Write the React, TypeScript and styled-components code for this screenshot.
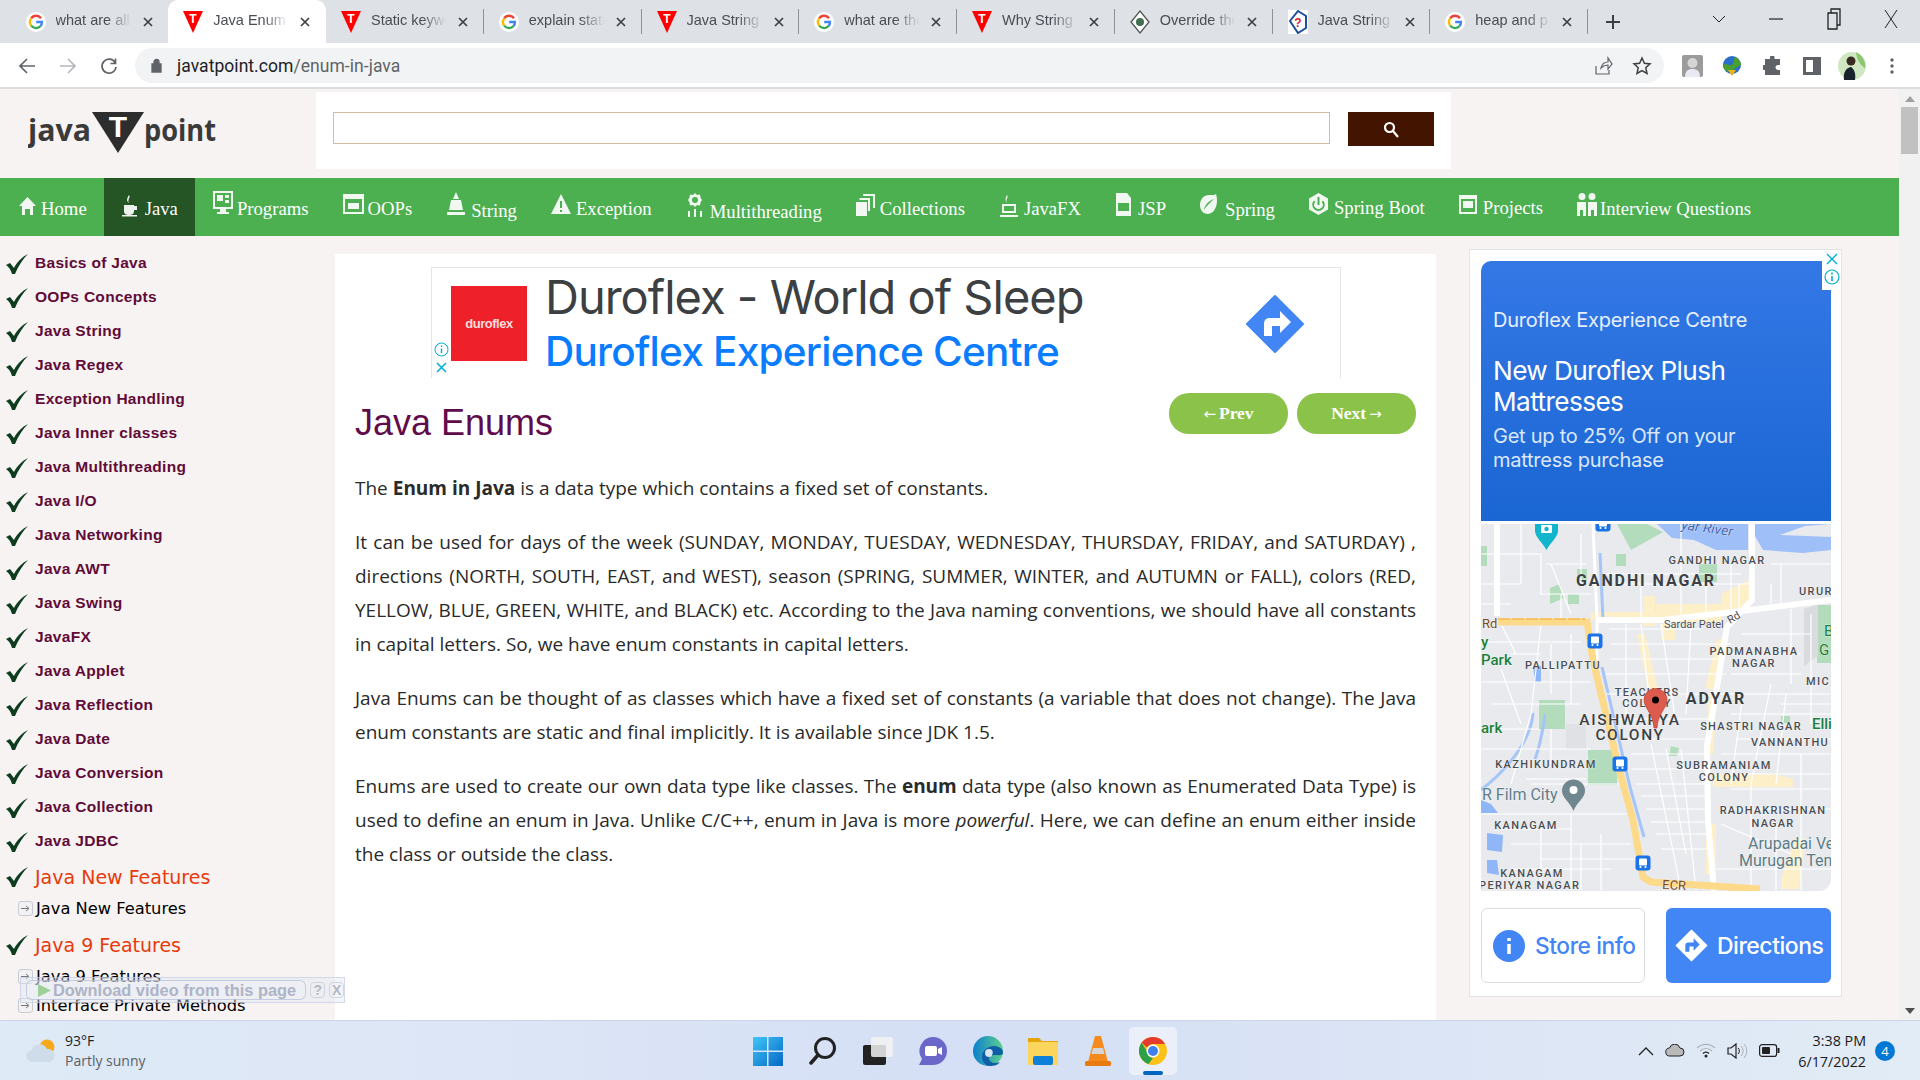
import React from "react";
import styled, { createGlobalStyle } from "styled-components";

const Global = createGlobalStyle`
  html, body { margin: 0; padding: 0; width: 1920px; height: 1080px; overflow: hidden; background: #f6f3f2; }
  #root { width: 1920px; height: 1080px; }
  * { box-sizing: border-box; }
`;

const Screen = styled.div`
  width: 1920px; height: 1080px; display: flex; flex-direction: column; overflow: hidden;
  font-family: "Open Sans", "Liberation Sans", sans-serif; position: relative;
`;

/* ---------- browser chrome ---------- */
const TabStrip = styled.div`
  height: 43px; flex: none; background: #dee1e6; display: flex; align-items: stretch; padding-left: 10.5px;
`;
const TabBox = styled.div<{ $active?: boolean; $sep?: boolean }>`
  flex: 0 0 157.75px; display: flex; align-items: center; padding-left: 15px; position: relative;
  background: ${(p) => (p.$active ? "#fff" : "transparent")};
  border-radius: ${(p) => (p.$active ? "10px 10px 0 0" : "0")};
  &::after {
    content: ""; display: ${(p) => (p.$sep ? "block" : "none")}; position: absolute; right: 0; top: 9px; width: 1px; height: 25px; background: #8e9196;
  }
`;
const TabIcon = styled.span`
  flex: 0 0 20px; width: 20px; height: 24px; display: flex; align-items: center; justify-content: center; margin-right: 10px;
`;
const TabTitle = styled.span`
  width: 82px; height: 18px; line-height: 15px; overflow: hidden; white-space: nowrap; font-family: "Liberation Sans", sans-serif; font-size: 14.5px; color: #4a4e54;
  -webkit-mask-image: linear-gradient(90deg, #000 62%, transparent 92%);
  mask-image: linear-gradient(90deg, #000 62%, transparent 92%);
`;
const TabClose = styled.span`
  margin-left: 3px; display: flex; width: 14px; height: 14px; align-items: center; justify-content: center; color: #3c4043;
`;
const NewTab = styled.span`
  margin-left: 17px; width: 20px; display: flex; align-items: center; color: #3c4043;
`;
const WindowControls = styled.div`
  margin-left: auto; display: flex; align-items: flex-start; color: #222;
`;
const WinBtn = styled.span`
  width: 57.5px; height: 38px; display: flex; align-items: center; justify-content: center;
`;
const Toolbar = styled.div`
  height: 46px; flex: none; background: #fff; border-bottom: 2px solid #dcdde0; display: flex; align-items: flex-start; padding-top: 5px;
`;
const NavBtn = styled.span`
  width: 41px; height: 35px; display: flex; align-items: center; justify-content: center; color: ${(p: { $muted?: boolean }) => (p.$muted ? "#b5b7ba" : "#5f6368")};
`;
const NavBtnGroup = styled.div`
  display: flex; padding-left: 6px; width: 135px;
`;
const Omnibox = styled.div`
  width: 1529px; height: 35px; background: #f1f3f4; border-radius: 18px; display: flex; align-items: center; padding-left: 16px; padding-right: 12px;
`;
const UrlText = styled.span`
  margin-left: 15px; font: 17.5px "Roboto", "Liberation Sans", sans-serif; color: #202124; letter-spacing: .05px;
`;
const UrlRest = styled.span`
  color: #5f6368;
`;
const OmniRight = styled.div`
  margin-left: auto; display: flex; gap: 19px; align-items: center; color: #5f6368;
`;
const Extensions = styled.div`
  flex: 1; display: flex; align-items: center; height: 35px; padding-left: 8px;
`;
const ExtCell = styled.span`
  width: 40px; display: flex; justify-content: center; align-items: center;
`;

/* ---------- page ---------- */
const Viewport = styled.div`
  height: 931px; flex: none; display: flex; overflow: hidden; background: #f6f3f2;
`;
const Page = styled.div`
  width: 1899px; flex: none; display: flex; flex-direction: column;
`;
const Header = styled.div`
  height: 89px; flex: none; display: flex; align-items: flex-start; padding-top: 3px;
`;
const LogoBox = styled.div`
  width: 316px; height: 77px; flex: none; padding: 14px 0 0 28px;
`;
const SearchBox = styled.div`
  width: 1135px; height: 77px; background: #fff; display: flex; align-items: flex-start; padding: 20px 0 0 17px;
`;
const SearchInput = styled.div`
  width: 997px; height: 32px; border: 1px solid #d2bd9f; background: #fff;
`;
const SearchBtn = styled.div`
  margin-left: 18px; width: 86px; height: 34px; background: #431400; display: flex; align-items: center; justify-content: center; color: #fff;
`;
const NavBar = styled.div`
  height: 58px; flex: none; background: #4caf50; display: flex; align-items: stretch; padding-left: 2px;
`;
const NavItem = styled.div<{ $active?: boolean; $gap?: number }>`
  display: flex; align-items: center; padding: 3px 17px 0; gap: ${(p) => p.$gap ?? 5}px; color: #fff; background: ${(p) => (p.$active ? "#255425" : "transparent")};
  font: 18.7px "Liberation Serif", serif; white-space: nowrap;
`;
const NavLabel = styled.span<{ $dy: number }>`
  transform: translateY(${(p) => p.$dy}px);
`;
const NavGlyph = styled.svg<{ $dy: number }>`
  transform: translateY(${(p) => p.$dy}px); flex: none; opacity: .92;
`;
const Columns = styled.div`
  flex: 1; display: flex; align-items: flex-start; min-height: 0;
`;
const Sidebar = styled.div`
  width: 335px; flex: none; padding-top: 10px; height: 100%; overflow: hidden;
`;
const SideRow = styled.div`
  height: 34px; display: flex; align-items: center; padding-left: 6px; font: bold 15.5px "Liberation Sans", sans-serif; color: #610b38; letter-spacing: .3px;
`;
const SideCheck = styled.span`
  width: 29px; flex: none; display: flex; transform: translateY(1px);
`;
const SideHeading = styled.div<{ $gap: number }>`
  height: 37px; display: flex; align-items: center; padding-left: 6px; font: 19px "DejaVu Sans", sans-serif; color: #e8390b; margin-top: ${(p) => p.$gap}px;
`;
const SubRow = styled.div<{ $h: number }>`
  height: ${(p) => p.$h}px; display: flex; align-items: center; padding-left: 18px; font: 16.3px "DejaVu Sans", sans-serif; color: #000; gap: 3px;
`;
const SubIcon = styled.span`
  width: 15px; height: 15px; flex: none; border: 1px solid #c9cdd3; border-radius: 3px; background: #f2f2f4; display: flex; align-items: center; justify-content: center; color: #777;
`;
const DownloadBar = styled.div`
  position: absolute; left: 20px; top: 977px; width: 325px; height: 26px; background: rgba(225, 230, 242, .4); border: 1px solid rgba(190, 200, 225, .6); display: flex; align-items: center; padding-left: 5px; gap: 3px;
`;
const DownloadPill = styled.div`
  width: 284px; height: 20px; border: 1px solid rgba(170, 180, 210, .6); border-radius: 6px; display: flex; align-items: center; padding-left: 10px; gap: 1px; font: bold 16.4px "Liberation Sans", sans-serif; color: #aeb4c6; background: rgba(240, 242, 250, .3); white-space: nowrap;
`;
const DownloadMini = styled.span`
  width: 15px; height: 16px; margin-left: 1px; border-radius: 4px; border: 1px solid #cfd4e2; font: bold 14px "Liberation Sans", sans-serif; color: #b3b8c8; display: flex; align-items: center; justify-content: center;
`;

const Main = styled.div`
  width: 1101px; flex: none; height: 766px; margin-top: 18px; background: #fff; padding: 13px 20px 0;
`;
const TopAd = styled.div`
  width: 910px; height: 111px; margin-left: 76px; border: 1px solid #e5e5e5; border-bottom: none; display: flex; position: relative; padding: 18px 0 0 19px;
`;
const AdLogo = styled.div`
  width: 76px; height: 75px; flex: none; background: #ee2029; display: flex; align-items: center; justify-content: center; color: #fbdcdc; font: bold 13px "Liberation Sans", sans-serif; letter-spacing: -.5px;
`;
const AdText = styled.div`
  margin: -17px 0 0 18px; display: flex; flex-direction: column;
`;
const AdTitle = styled.div`
  font: 47px/56px "Inter", "Liberation Sans", sans-serif; color: #3c4043; letter-spacing: -1px; white-space: nowrap;
`;
const AdSub = styled.div`
  font: 500 40.5px/54px "Inter", "Liberation Sans", sans-serif; color: #0a7cff; letter-spacing: -.75px; white-space: nowrap;
`;
const AdDiamond = styled.span`
  position: absolute; left: 814px; top: 27px; display: flex;
`;
const AdMarks = styled.span`
  position: absolute; left: 2px; top: 74px; display: flex; flex-direction: column; gap: 5px; align-items: center;
`;
const TitleRow = styled.div`
  display: flex; align-items: flex-start; margin-top: 15px; height: 78px;
`;
const PageTitle = styled.h1`
  margin: 8px 0 0; font: 400 36px/44px "Liberation Sans", sans-serif; color: #610b4b;
`;
const Pager = styled.div`
  margin-left: auto; display: flex; gap: 9px;
`;
const PagerBtn = styled.div`
  width: 119px; height: 41px; background: #8bc34a; border-radius: 20px; display: flex; align-items: center; justify-content: center; gap: 3px; color: #fff; font: bold 17.5px "Liberation Serif", serif;
`;
const PagerArrow = styled.span`
  font: 400 15px "DejaVu Sans", sans-serif;
`;
const Para = styled.p`
  margin: 0 0 20px; font: 19px/34px "Open Sans", "Noto Sans", sans-serif; color: #2a2a2a; text-align: justify;
`;

const RightAd = styled.div`
  width: 373px; flex: none; margin: 13px 0 0 33px; height: 748px; background: #fff; border: 1px solid #e2e2e2; padding: 11px 0 0 11px; position: relative;
`;
const AdHero = styled.div`
  width: 350px; height: 260px; border-radius: 10px 0 0 0; background: linear-gradient(180deg, #3478e6, #1a66d2); color: #fff; padding: 46px 0 0 12px;
`;
const HeroEyebrow = styled.div`
  font: 20px/26px "Inter", "Liberation Sans", sans-serif; color: #e6efff; letter-spacing: -.25px;
`;
const HeroTitle = styled.div`
  margin-top: 22px; font: 26.2px/31px "Inter", "Liberation Sans", sans-serif; letter-spacing: -.6px;
`;
const HeroText = styled.div`
  margin-top: 7px; font: 20px/24px "Inter", "Liberation Sans", sans-serif; color: #dbe7fb; letter-spacing: -.25px;
`;
const AdCorner = styled.span`
  position: absolute; right: 0; top: 0; width: 19px; height: 40px; background: #fff; display: flex; flex-direction: column; align-items: center; padding-top: 3px; gap: 4px;
`;
const MapFrame = styled.div`
  width: 350px; height: 367px; margin-top: 3px; border-radius: 0 0 12px 0; overflow: hidden; display: flex;
`;
const AdButtons = styled.div`
  margin-top: 17px; width: 350px; display: flex; justify-content: space-between;
`;
const StoreBtn = styled.div`
  width: 164px; height: 75px; border: 1px solid #dadce0; border-radius: 6px; display: flex; align-items: center; padding-left: 11px; gap: 10px; color: #4285f4; font: 500 22.7px "Inter", "Liberation Sans", sans-serif; letter-spacing: -.4px; white-space: nowrap;
`;
const DirBtn = styled.div`
  width: 165px; height: 75px; border-radius: 6px; background: #4285f4; display: flex; align-items: center; padding-left: 9px; gap: 9px; color: #fff; font: 500 23px "Inter", "Liberation Sans", sans-serif; letter-spacing: -.5px; white-space: nowrap;
`;

const Scrollbar = styled.div`
  width: 21px; flex: none; background: #f1f1f1; display: flex; flex-direction: column; align-items: center; padding-top: 7px; color: #a0a0a0;
`;
const ScrollThumb = styled.div`
  width: 17px; height: 47px; margin-top: 5px; background: #c1c1c1;
`;
const ScrollDown = styled.span`
  margin-top: auto; margin-bottom: 6px; display: flex; color: #505050;
`;

/* ---------- taskbar ---------- */
const Taskbar = styled.div`
  height: 60px; flex: none; display: flex; align-items: stretch; border-top: 1px solid #cbd5e6;
  background: linear-gradient(90deg, #deeaf6 0%, #dde6f6 25%, #d5dff5 50%, #dbe5f5 75%, #e2ecf6 100%);
`;
const Weather = styled.div`
  width: 740px; flex: none; display: flex; align-items: center; padding-left: 26px; gap: 9px;
`;
const WeatherText = styled.div`
  display: flex; flex-direction: column; font: 14px/20px "Open Sans", sans-serif; color: #1f1f1f;
`;
const WeatherSub = styled.span`
  color: #5a5f66;
`;
const TaskIcons = styled.div`
  display: flex; align-items: center;
`;
const TaskCell = styled.span<{ $on?: boolean }>`
  width: 48px; height: 48px; margin: 0 3.5px; display: flex; align-items: center; justify-content: center; position: relative; border-radius: 5px;
  background: ${(p) => (p.$on ? "#ebeffa" : "transparent")};
  &::after {
    content: ""; display: ${(p) => (p.$on ? "block" : "none")}; position: absolute; bottom: 0; left: 14px; width: 20px; height: 4px; border-radius: 2px; background: #0067c0;
  }
`;
const Tray = styled.div`
  margin-left: auto; display: flex; align-items: center; padding-right: 25px; color: #222;
`;
const TrayIcons = styled.div`
  display: flex; align-items: center; gap: 11px; margin-right: 18px;
`;
const Clock = styled.div`
  display: flex; flex-direction: column; align-items: flex-end; font: 14.3px/21px "Open Sans", sans-serif; color: #1a1a1a; margin-right: 9px;
`;
const Badge = styled.span`
  width: 20px; height: 20px; border-radius: 50%; background: #0078d4; color: #fff; font: 13px "Open Sans", sans-serif; display: flex; align-items: center; justify-content: center;
`;

/* ---------- drawings ---------- */
const GFav = () => (
  <svg width="20" height="20" viewBox="0 0 20 20">
    <circle cx="10" cy="10" r="10" fill="#fff" />
    <path d="M15 6.2A6 6 0 0 0 5.2 6.4" fill="none" stroke="#ea4335" strokeWidth="2.4" />
    <path d="M5.2 6.4a6 6 0 0 0 0 7.2" fill="none" stroke="#fbbc05" strokeWidth="2.4" />
    <path d="M5.2 13.6A6 6 0 0 0 14.6 14" fill="none" stroke="#34a853" strokeWidth="2.4" />
    <path d="M14.6 14a6 6 0 0 0 1.3-4H10.2" fill="none" stroke="#4285f4" strokeWidth="2.4" />
  </svg>
);
const TFav = () => (
  <svg width="20" height="24" viewBox="0 0 20 24">
    <path d="M0 1h20L10 23z" fill="#f00" />
    <text x="10" y="13" textAnchor="middle" fontFamily="Liberation Sans" fontWeight="700" fontSize="12" fill="#fff">T</text>
  </svg>
);
const DiamondFav = () => (
  <svg width="20" height="24" viewBox="0 0 20 24">
    <path d="M10 1l9 11-9 11-9-11z" fill="#fff" stroke="#555" strokeWidth="1.3" />
    <circle cx="10" cy="12" r="4" fill="#3f6f4f" />
  </svg>
);
const QFav = () => (
  <svg width="20" height="24" viewBox="0 0 20 24">
    <rect width="20" height="24" fill="#fff" />
    <path d="M10 1l8 5v12l-8 5-8-12z" fill="#fff" stroke="#1c4f9c" strokeWidth="2" />
    <text x="10" y="17" textAnchor="middle" fontFamily="Liberation Sans" fontWeight="700" fontSize="12" fill="#d2232a">?</text>
  </svg>
);
const CloseX = () => (
  <svg width="10" height="10" viewBox="0 0 10 10"><path d="M1 1l8 8M9 1L1 9" stroke="currentColor" strokeWidth="1.7" /></svg>
);
const Check = () => (
  <svg width="23" height="21" viewBox="0 0 23 21">
    <path d="M0 11l4-2 4 5C11 8 16 3 22 0c-5 5-10 12-13 20H6C5 16 3 13 0 11z" fill="#0e3c1f" />
  </svg>
);
const Glyph = ({ w, h, dy, children }: { w: number; h: number; dy: number; children: React.ReactNode }) => (
  <NavGlyph width={w} height={h} viewBox={`0 0 ${w} ${h}`} $dy={dy} fill="#fff">{children}</NavGlyph>
);

const tabs: { t: string; i: React.ReactNode }[] = [
  { t: "what are all", i: <GFav /> },
  { t: "Java Enum - ", i: <TFav /> },
  { t: "Static keyword", i: <TFav /> },
  { t: "explain static", i: <GFav /> },
  { t: "Java String - ", i: <TFav /> },
  { t: "what are the", i: <GFav /> },
  { t: "Why String", i: <TFav /> },
  { t: "Override the", i: <DiamondFav /> },
  { t: "Java String s", i: <QFav /> },
  { t: "heap and p", i: <GFav /> },
];

const navItems: { l: string; dy: number; g: number; icon: React.ReactNode; active?: boolean }[] = [
  { l: "Home", dy: 0, g: 5, icon: <Glyph w={17} h={20} dy={-3}><path d="M8.5 1L17 10h-3v9h-3v-6H6v6H3v-9H0z" /></Glyph> },
  { l: "Java", dy: 0, g: 7, active: true, icon: <Glyph w={17} h={24} dy={-3}><path d="M3 11h10v6c0 3-2 4-5 4s-5-1-5-4zM13 12h3v4h-3zM1 21h15v1.5H1zM8 1c2 3-2 4 0 8-3-2-2-5 0-8z" /></Glyph> },
  { l: "Programs", dy: 0, g: 3, icon: <Glyph w={22} h={26} dy={-5}><path fillRule="evenodd" d="M1 0h20v18h-7v3h3v2H5v-2h3v-3H1zM3 2v14h16V2zM5 4h6v6H5zM13 4h4v3h-4zM13 9h4v3h-4z" /></Glyph> },
  { l: "OOPs", dy: 0, g: 4, icon: <Glyph w={21} h={22} dy={-4}><path fillRule="evenodd" d="M0 0h21v20H0zM2 5v13h17V5zM5 9h11v6H5z" /></Glyph> },
  { l: "String", dy: 2, g: 5, icon: <Glyph w={20} h={26} dy={-4}><path d="M10 0l3 7H7zM5 8h10l2 10H3zM1 20h18v3H1z" /></Glyph> },
  { l: "Exception", dy: 0, g: 5, icon: <Glyph w={20} h={22} dy={-4}><path fillRule="evenodd" d="M10 0l10 20H0zM9 7v7h2V7zM9 16v2h2v-2z" /></Glyph> },
  { l: "Multithreading", dy: 3, g: 6, icon: <Glyph w={18} h={26} dy={-3}><path fillRule="evenodd" d="M9 0l2 2 3-.5.5 3L16 7l-1.500 2.500-.5 3-3-.5-2 2-2-2-3 .5-.5-3L2 7l1.500-2.500.5-3 3 .5zM9 4a3 3 0 100 6 3 3 0 000-6zM2 18h2v6H2zM8 16h2v8H8zM14 18h2v6h-2z" /></Glyph> },
  { l: "Collections", dy: 0, g: 5, icon: <Glyph w={19} h={24} dy={-4}><path d="M0 9h11v14H0zM3.500 5H14v13h-2V7H3.500zM7 1h12v14h-2V3H7z" /></Glyph> },
  { l: "JavaFX", dy: 0, g: 5, icon: <Glyph w={20} h={24} dy={-2}><path fillRule="evenodd" d="M3 9h14v9H3zM5 11v5h10v-5zM8 0c2 3-2 4 0 8-2-2-2-5 0-8zM1 20h18v2H1z" /></Glyph> },
  { l: "JSP", dy: 0, g: 6, icon: <Glyph w={17} h={24} dy={-4}><path fillRule="evenodd" d="M1 0h11l4 5v18H1zM3 10v8h11v-8z" /></Glyph> },
  { l: "Spring", dy: 1, g: 7, icon: <Glyph w={18} h={22} dy={-4}><path fillRule="evenodd" d="M9 1c2 0 5 .5 7-1 3 9-1 20-8 20C3 20 0 16 0 11 0 5 4 1 9 1zM14 5C9 7 5 10 4 16c2-4 6-7 10-11z" /></Glyph> },
  { l: "Spring Boot", dy: -1, g: 6, icon: <Glyph w={19} h={22} dy={-5}><path fillRule="evenodd" d="M9.500 0L19 5.500v11L9.500 22 0 16.500v-11zM8.500 4v8h2V4zM5 7.500a6.200 6.200 0 109 0l-1.300 1.400a4.300 4.300 0 11-6.400 0z" /></Glyph> },
  { l: "Projects", dy: -1, g: 6, icon: <Glyph w={18} h={20} dy={-4}><path fillRule="evenodd" d="M0 0h18v19H0zM2 4v13h14V4zM4 6h10v7H4z" /></Glyph> },
  { l: "Interview Questions", dy: 0, g: 3, icon: <Glyph w={20} h={23} dy={-4}><path fillRule="evenodd" d="M5 0a3.500 3.500 0 110 7 3.500 3.500 0 010-7zM15 0a3.500 3.500 0 110 7 3.500 3.500 0 010-7zM0 9h9v14H6v-6H3v6H0zM11 9h9v14h-3v-6h-3v6h-3z" /></Glyph> },
];

const sideItems = [
  "Basics of Java", "OOPs Concepts", "Java String", "Java Regex", "Exception Handling", "Java Inner classes",
  "Java Multithreading", "Java I/O", "Java Networking", "Java AWT", "Java Swing", "JavaFX", "Java Applet",
  "Java Reflection", "Java Date", "Java Conversion", "Java Collection", "Java JDBC",
];

type L = { t: string; x: number; y: number; s?: number; c?: string; a?: "middle" | "start"; w?: number; ls?: number; r?: number; it?: boolean };
const dk = "#4a4d52";
const labels: L[] = [
  { t: "yar River", x: 200, y: 5, s: 14, c: "#3f66b0", r: 8, it: true },
  { t: "GANDHI NAGAR", x: 236, y: 40, s: 11, c: dk, a: "middle", ls: 1.4, w: 500 },
  { t: "GANDHI NAGAR", x: 165, y: 62, s: 16, c: "#3c4043", a: "middle", ls: 1.9, w: 700 },
  { t: "URUR", x: 318, y: 71, s: 11, c: dk, ls: 1.4, w: 500 },
  { t: "Rd", x: 1, y: 104, s: 13, c: "#7a4a1a" },
  { t: "Sardar Patel", x: 183, y: 104, s: 11, c: dk },
  { t: "Rd", x: 249, y: 100, s: 11, c: dk, r: -30 },
  { t: "y", x: 0, y: 123, s: 15, c: "#1a7f3c", w: 500 },
  { t: "Park", x: 0, y: 141, s: 15, c: "#1a7f3c", w: 500 },
  { t: "PALLIPATTU", x: 44, y: 145, s: 11, c: dk, ls: 1.4, w: 500 },
  { t: "PADMANABHA", x: 273, y: 131, s: 11, c: dk, a: "middle", ls: 1.4, w: 500 },
  { t: "NAGAR", x: 273, y: 143, s: 11, c: dk, a: "middle", ls: 1.4, w: 500 },
  { t: "B", x: 343, y: 112, s: 15, c: "#1a7f3c" },
  { t: "G", x: 338, y: 131, s: 15, c: "#1a7f3c" },
  { t: "MIC", x: 325, y: 161, s: 11, c: dk, ls: 1.4, w: 500 },
  { t: "TEACHERS", x: 166, y: 172, s: 11, c: dk, a: "middle", ls: 1.2, w: 500 },
  { t: "COLONY", x: 166, y: 183, s: 11, c: dk, a: "middle", ls: 1.2, w: 500 },
  { t: "ADYAR", x: 235, y: 180, s: 16, c: "#3c4043", a: "middle", ls: 2, w: 700 },
  { t: "AISHWARYA", x: 149, y: 201, s: 15.5, c: "#3c4043", a: "middle", ls: 1.6, w: 500 },
  { t: "COLONY", x: 149, y: 216, s: 15.5, c: "#3c4043", a: "middle", ls: 1.6, w: 500 },
  { t: "SHASTRI NAGAR", x: 270, y: 206, s: 11, c: dk, a: "middle", ls: 1.3, w: 500 },
  { t: "VANNANTHU", x: 270, y: 222, s: 11, c: dk, ls: 1.3, w: 500 },
  { t: "Elli", x: 331, y: 205, s: 15, c: "#1a7f3c", w: 500 },
  { t: "ark", x: 0, y: 209, s: 15, c: "#1a7f3c", w: 500 },
  { t: "KAZHIKUNDRAM", x: 65, y: 244, s: 11, c: dk, a: "middle", ls: 1.4, w: 500 },
  { t: "SUBRAMANIAM", x: 243, y: 245, s: 11, c: dk, a: "middle", ls: 1.4, w: 500 },
  { t: "COLONY", x: 243, y: 257, s: 11, c: dk, a: "middle", ls: 1.4, w: 500 },
  { t: "R Film City", x: 1, y: 276, s: 16, c: "#5f7d8a" },
  { t: "RADHAKRISHNAN", x: 292, y: 290, s: 11, c: dk, a: "middle", ls: 1.2, w: 500 },
  { t: "NAGAR", x: 292, y: 303, s: 11, c: dk, a: "middle", ls: 1.2, w: 500 },
  { t: "KANAGAM", x: 45, y: 305, s: 11, c: dk, a: "middle", ls: 1.4, w: 500 },
  { t: "Arupadai Ve", x: 267, y: 325, s: 16, c: "#5b7b85" },
  { t: "Murugan Ten", x: 258, y: 342, s: 16, c: "#5b7b85" },
  { t: "KANAGAM", x: 51, y: 353, s: 11, c: dk, a: "middle", ls: 1.4, w: 500 },
  { t: "PERIYAR NAGAR", x: -2, y: 365, s: 11, c: dk, ls: 1.4, w: 500 },
  { t: "ECR", x: 181, y: 365, s: 13, c: "#7a4a1a", r: 3 },
];

const thin = [
  "M0 30H60V70H110", "M40 0V60", "M0 60H40", "M70 40L90 90", "M0 118H100", "M60 100L50 190L30 260", "M0 158H110", "M10 180H100", "M0 225H110",
  "M50 260H140", "M0 290H145", "M90 290V366", "M30 320H150", "M120 310V366", "M60 335H160",
  "M125 50H260", "M135 60H270", "M130 120H250", "M125 150H245", "M125 170H240", "M130 195H230", "M145 100V190", "M180 100L195 200",
  "M200 0V90", "M160 60V96", "M225 60V96", "M250 40V85", "M170 220L200 366", "M150 230H225", "M155 260H230", "M165 285H225", "M175 310H230",
  "M240 170H350", "M290 160L270 260", "M240 230H350", "M250 265H350", "M240 300L310 330", "M330 90V200", "M290 40H350", "M300 40V80", "M320 230V366", "M235 345H350",
  "M260 110H330", "M250 150H320", "M300 180H350", "M0 80H30", "M20 100L35 130",
  "M130 135H240", "M128 105H220", "M140 215H225", "M150 245H228", "M160 272H225", "M170 298H228", "M180 325H230",
  "M210 100L205 190", "M160 100L170 190", "M200 225L215 366", "M185 225L205 330", "M258 60V90", "M290 60V80", "M310 85V160",
  "M240 130H320", "M250 190H350", "M255 215H350", "M245 250H350", "M262 170L250 260", "M305 170L295 260", "M240 285H350", "M270 260V366", "M295 300V366",
  "M30 130H60", "M70 120V170", "M90 110V180", "M20 205H58", "M20 145L40 200", "M45 255H105", "M70 205V240", "M20 305H90", "M60 300V366", "M30 345H130", "M100 320V366", "M80 70V100", "M65 40H105", "M100 10V60",
];
const pale = [
  "M162 72h12v30h-12z", "M110 88h90v8h-90z", "M175 80h65v18h-65z", "M240 70l30-15v30l-30 6z", "M164 110l14 60h-10l-12-60z", "M180 100h14v16h-14z",
  "M236 115l8 0-12 50h-8z", "M228 170h8l-4 60h-8z", "M232 250h60l20 5v8h-80z", "M225 300h10v50h-10z", "M300 355l14-40h10l-6 50h-18z",
];
const green: string[] = [
  "M69 64l10-4 4 14-14 6z", "M87 70h11v10h-11z", "M58 176h26v29H58z", "M107 226h29v35h-29z", "M336 81h14v58h-14z", "M96 45h10v12H96z",
  "M0 22h6v20H0z", "M135 30h10v12h-10z", "M218 40h18v18h-18z", "M300 192h9v7h-9z", "M190 222l8 2-2 8-8 0z", "M136 0h30l16 8-32 18z",
];

const MapDrawing = () => (
  <svg width="350" height="367" viewBox="0 0 350 367">
    <rect width="350" height="367" fill="#e8eaed" />
    {green.map((d) => <path key={d} d={d} fill="#b2dcbc" />)}
    <path d="M176 0h91v26h-32l-22-10-22-2z" fill="#9fbff8" />
    <path d="M274 0h76v26l-28 3-40-3-8-14z" fill="#9fbff8" />
    <path d="M299 11l25-9 26-2v13z" fill="#e8eaed" />
    <path d="M6 309l16 2-1 17-15-2zM6 336l10 0 2 15-12-2zM0 276l10 4 7 9H0zM52 142h8v16h-6z" fill="#8fb6f6" />
    <rect x="85" y="200" width="20" height="25" fill="#dfe1e4" />
    <path d="M323 85l14-5v52l-14 10z" fill="#d9dbdf" />
    {pale.map((d) => <path key={d} d={d} fill="#fdf0c9" />)}
    <path d="M119 29l3 67M121 143l28 120 14 50" fill="none" stroke="#a5c4f7" strokeWidth="3" />
    <path d="M52 189c-2 30-30 60-52 77M64 190c-2 20-8 40-10 45" fill="none" stroke="#a5c4f7" strokeWidth="3" />
    {thin.map((d) => <path key={d} d={d} fill="none" stroke="#fff" strokeWidth="1.2" />)}
    <path d="M16 0V92M116 96H182L269 86L350 76M271 0V76L246 103L226 222L227 296L233 367" fill="none" stroke="#fff" strokeWidth="6" />
    <path d="M112 0L116 96V140" fill="none" stroke="#fff" strokeWidth="3" />
    <path d="M17 98H106L112 136L139 249L152 296L162 353L170 358L279 365" fill="none" stroke="#fdd98a" strokeWidth="7" />
    <path d="M17 95H104" fill="none" stroke="#f5a623" strokeWidth="1.2" strokeDasharray="12 2" />
    {labels.map((l, i) => (
      <text
        key={i}
        x={l.x}
        y={l.y}
        fontFamily="Roboto, Liberation Sans, sans-serif"
        fontSize={l.s}
        fill={l.c}
        fontWeight={l.w ?? 400}
        fontStyle={l.it ? "italic" : "normal"}
        textAnchor={l.a ?? "start"}
        letterSpacing={l.ls ?? 0}
        transform={l.r ? `rotate(${l.r} ${l.x} ${l.y})` : undefined}
        stroke="#fff"
        strokeWidth=".5"
        paintOrder="stroke"
      >
        {l.t}
      </text>
    ))}
    {[[114, 117], [139, 240], [122, 0], [162, 339]].map(([x, y]) => (
      <g key={`${x}-${y}`}>
        <rect x={x - 7.5} y={y - 7.5} width="15" height="15" rx="3" fill="#1a73e8" />
        <rect x={x - 4} y={y - 4.5} width="8" height="7" rx="1" fill="#fff" />
        <circle cx={x - 2.5} cy={y + 4} r="1.1" fill="#fff" />
        <circle cx={x + 2.500} cy={y + 4} r="1.1" fill="#fff" />
      </g>
    ))}
    <path d="M54 -2h23v9c0 6-8 12-11.500 19C62 19 54 13 54 7z" fill="#12b5cb" />
    <rect x="60" y="1" width="11" height="8" rx="1" fill="#fff" />
    <circle cx="65.500" cy="5" r="2.200" fill="#12b5cb" />
    <path d="M81 267a11.500 11.500 0 1123 0c0 7-8 11-11.500 20C89 278 81 274 81 267z" fill="#70878f" />
    <circle cx="92.500" cy="266" r="4" fill="#fff" />
    <path d="M163 176a11.500 11.500 0 1123 0c0 8-9 13-10 28h-3c-1-15-10-20-10-28z" fill="#dd5b4c" stroke="#b8443a" strokeWidth=".7" />
    <circle cx="174.500" cy="176" r="3.500" fill="#000" />
  </svg>
);

const DirDiamond = ({ s, bg, fg }: { s: number; bg: string; fg: string }) => (
  <svg width={s} height={s} viewBox="0 0 32 32">
    <path d="M16 1l15 15-15 15L1 16z" fill={bg} stroke={bg} strokeWidth="1" strokeLinejoin="round" />
    <path d="M10 22v-6c0-2 1-3 3-3h5V9l6 6-6 6v-4h-4v5z" fill={fg} />
  </svg>
);

const ChromeLogo = () => (
  <svg width="28" height="28" viewBox="0 0 28 28">
    <circle cx="14" cy="14" r="14" fill="#fbc116" />
    <path d="M14 0a14 14 0 0112.100 7H14a7 7 0 00-6.100 3.500L2.600 5.500A14 14 0 0114 0z" fill="#e33b2e" />
    <path d="M2.600 5.500L8 14.500a7 7 0 006 6.500L9.500 27A14 14 0 012.600 5.500z" fill="#2d9f46" />
    <circle cx="14" cy="14" r="6.500" fill="#fff" />
    <circle cx="14" cy="14" r="5" fill="#3f80ee" />
  </svg>
);

const SubArrow = () => (
  <SubIcon><svg width="9" height="7" viewBox="0 0 9 7"><path d="M0 3.500h7M5 1l3 2.500L5 6" fill="none" stroke="currentColor" /></svg></SubIcon>
);

export default function App() {
  return (
    <Screen>
      <Global />
      <TabStrip>
        {tabs.map((t, i) => (
          <TabBox key={i} $active={i === 1} $sep={i >= 2}>
            <TabIcon>{t.i}</TabIcon>
            <TabTitle>{t.t}</TabTitle>
            <TabClose><CloseX /></TabClose>
          </TabBox>
        ))}
        <NewTab>
          <svg width="16" height="16" viewBox="0 0 16 16"><path d="M8 1v14M1 8h14" stroke="currentColor" strokeWidth="2" /></svg>
        </NewTab>
        <WindowControls>
          <WinBtn><svg width="14" height="8" viewBox="0 0 14 8"><path d="M1 1l6 6 6-6" fill="none" stroke="currentColor" /></svg></WinBtn>
          <WinBtn><svg width="14" height="2" viewBox="0 0 14 2"><path d="M0 1h14" stroke="currentColor" strokeWidth="1.2" /></svg></WinBtn>
          <WinBtn><svg width="14" height="22" viewBox="0 0 14 22"><path d="M1 5h9v16H1zM4 5V1h9v16h-3" fill="none" stroke="currentColor" strokeWidth="1.3" /></svg></WinBtn>
          <WinBtn><svg width="14" height="20" viewBox="0 0 14 20"><path d="M1 1l12 18M13 1L1 19" stroke="currentColor" strokeWidth="1" /></svg></WinBtn>
        </WindowControls>
      </TabStrip>

      <Toolbar>
        <NavBtnGroup>
          <NavBtn>
            <svg width="18" height="18" viewBox="0 0 18 18"><path d="M17 9H2M9 2L2 9l7 7" fill="none" stroke="currentColor" strokeWidth="1.700" /></svg>
          </NavBtn>
          <NavBtn $muted>
            <svg width="18" height="18" viewBox="0 0 18 18"><path d="M1 9h15M9 2l7 7-7 7" fill="none" stroke="currentColor" strokeWidth="1.700" /></svg>
          </NavBtn>
          <NavBtn>
            <svg width="18" height="18" viewBox="0 0 18 18"><path d="M15 5.500A7 7 0 1016 10M15.500 1.500v5h-5" fill="none" stroke="currentColor" strokeWidth="1.700" /></svg>
          </NavBtn>
        </NavBtnGroup>
        <Omnibox>
          <svg width="11" height="15" viewBox="0 0 11 15"><path d="M1 6h9v8H1zM3 6V4a2.500 2.500 0 015 0v2" fill="#5f6368" stroke="#5f6368" strokeWidth="1.300" /></svg>
          <UrlText>javatpoint.com<UrlRest>/enum-in-java</UrlRest></UrlText>
          <OmniRight>
            <svg width="20" height="20" viewBox="0 0 20 20"><path d="M3 10v8h13v-4M8 12c1-4 4-6 7-6V2l4 6-4 5V9c-3 0-5 1-7 3z" fill="none" stroke="currentColor" strokeWidth="1.200" /></svg>
            <svg width="20" height="20" viewBox="0 0 20 20"><path d="M10 2l2.400 5.300 5.600.600-4.200 3.900 1.200 5.700L10 14.600 5 17.500l1.200-5.700L2 7.900l5.600-.6z" fill="none" stroke="#3c4043" strokeWidth="1.500" /></svg>
          </OmniRight>
        </Omnibox>
        <Extensions>
          <ExtCell><svg width="21" height="22" viewBox="0 0 21 22"><rect width="21" height="22" rx="2" fill="#9b9b9b" /><circle cx="10.500" cy="8" r="5" fill="#d6d6d6" /><path d="M3 22c0-6 3-8 7.500-8S18 16 18 22z" fill="#e8eaf2" /></svg></ExtCell>
          <ExtCell><svg width="20" height="22" viewBox="0 0 20 22"><circle cx="10" cy="10" r="9" fill="#2a6fc9" /><path d="M1 10c3-3 7 2 9 0s1-7 4-8c3 2 5 5 5 8-5 1-9 8-12 7-4-1-6-4-6-7z" fill="#4aa02c" /><path d="M10 21l-4-6h8z" fill="#f2b01e" /></svg></ExtCell>
          <ExtCell><svg width="19" height="19" viewBox="0 0 19 19"><path d="M7 1a2.300 2.300 0 014.500 0V3H17v6h-2a2.500 2.500 0 000 5h2v5H2v-5H1a2.500 2.500 0 010-5h1V3h5z" fill="#5f6368" /></svg></ExtCell>
          <ExtCell><svg width="18" height="18" viewBox="0 0 18 18"><path fillRule="evenodd" d="M0 0h18v18H0zM3 3v12h7V3z" fill="#5f6368" /></svg></ExtCell>
          <ExtCell><svg width="28" height="28" viewBox="0 0 28 28"><circle cx="14" cy="14" r="14" fill="#cfe8c2" /><path d="M6 28c-1-8 2-12 7-13 3 2 5 6 4 13z" fill="#17222c" /><circle cx="13" cy="9" r="4.500" fill="#3b2a22" /><path d="M18 0c6 3 10 9 9 16-3-2-8-6-9-16z" fill="#8ac76d" /></svg></ExtCell>
          <ExtCell><svg width="4" height="16" viewBox="0 0 4 16"><circle cx="2" cy="2" r="1.700" fill="#5f6368" /><circle cx="2" cy="8" r="1.700" fill="#5f6368" /><circle cx="2" cy="14" r="1.700" fill="#5f6368" /></svg></ExtCell>
        </Extensions>
      </Toolbar>

      <Viewport>
        <Page>
          <Header>
            <LogoBox>
              <svg width="190" height="50" viewBox="0 0 190 50">
                <text x="0" y="35" fontFamily="Open Sans" fontWeight="700" fontSize="31" fill="#3a3a3a" textLength="63" lengthAdjust="spacingAndGlyphs">java</text>
                <path d="M64 6h52L90 47z" fill="#2d2d2d" />
                <text x="90" y="31" textAnchor="middle" fontFamily="Liberation Sans" fontWeight="700" fontSize="30" fill="#fff">T</text>
                <text x="116" y="35" fontFamily="Open Sans" fontWeight="700" fontSize="31" fill="#3a3a3a" textLength="72" lengthAdjust="spacingAndGlyphs">point</text>
              </svg>
            </LogoBox>
            <SearchBox>
              <SearchInput />
              <SearchBtn>
                <svg width="16" height="17" viewBox="0 0 16 17"><circle cx="6.500" cy="6.500" r="4.500" fill="none" stroke="#fff" strokeWidth="2.200" /><path d="M10 10l5 6" stroke="#fff" strokeWidth="2.200" /></svg>
              </SearchBtn>
            </SearchBox>
          </Header>
          <NavBar>
            {navItems.map((n) => (
              <NavItem key={n.l} $active={n.active} $gap={n.g}>
                {n.icon}
                <NavLabel $dy={n.dy}>{n.l}</NavLabel>
              </NavItem>
            ))}
          </NavBar>
          <Columns>
            <Sidebar>
              {sideItems.map((s) => (
                <SideRow key={s}><SideCheck><Check /></SideCheck>{s}</SideRow>
              ))}
              <SideHeading $gap={0}><SideCheck><Check /></SideCheck>Java New Features</SideHeading>
              <SubRow $h={27}><SubArrow />Java New Features</SubRow>
              <SideHeading $gap={4}><SideCheck><Check /></SideCheck>Java 9 Features</SideHeading>
              <SubRow $h={27}><SubArrow />Java 9 Features</SubRow>
              <SubRow $h={30}><SubArrow />Interface Private Methods</SubRow>
            </Sidebar>
            <Main>
              <TopAd>
                <AdLogo>duroflex</AdLogo>
                <AdText>
                  <AdTitle>Duroflex - World of Sleep</AdTitle>
                  <AdSub>Duroflex Experience Centre</AdSub>
                </AdText>
                <AdDiamond>
                  <svg width="58" height="58" viewBox="0 0 58 58">
                    <path d="M29 1l28 28-28 28L1 29z" fill="#4285f4" stroke="#4285f4" strokeWidth="2" strokeLinejoin="round" />
                    <path d="M18 41V29c0-4 2-6 6-6h10v-7l11 11-11 11v-7h-8v10z" fill="#fff" />
                  </svg>
                </AdDiamond>
                <AdMarks>
                  <svg width="15" height="15" viewBox="0 0 15 15"><circle cx="7.500" cy="7.500" r="6.500" fill="none" stroke="#00aecd" /><path d="M7.500 6.500V11M7.500 3.500V5" stroke="#00aecd" strokeWidth="1.400" /></svg>
                  <svg width="11" height="11" viewBox="0 0 11 11"><path d="M1 1l9 9M10 1l-9 9" stroke="#00aecd" strokeWidth="1.500" /></svg>
                </AdMarks>
              </TopAd>
              <TitleRow>
                <PageTitle>Java Enums</PageTitle>
                <Pager>
                  <PagerBtn><PagerArrow>←</PagerArrow>Prev</PagerBtn>
                  <PagerBtn>Next<PagerArrow>→</PagerArrow></PagerBtn>
                </Pager>
              </TitleRow>
              <Para>The <b>Enum in Java</b> is a data type which contains a fixed set of constants.</Para>
              <Para>It can be used for days of the week (SUNDAY, MONDAY, TUESDAY, WEDNESDAY, THURSDAY, FRIDAY, and SATURDAY) , directions (NORTH, SOUTH, EAST, and WEST), season (SPRING, SUMMER, WINTER, and AUTUMN or FALL), colors (RED, YELLOW, BLUE, GREEN, WHITE, and BLACK) etc. According to the Java naming conventions, we should have all constants in capital letters. So, we have enum constants in capital letters.</Para>
              <Para>Java Enums can be thought of as classes which have a fixed set of constants (a variable that does not change). The Java enum constants are static and final implicitly. It is available since JDK 1.5.</Para>
              <Para>Enums are used to create our own data type like classes. The <b>enum</b> data type (also known as Enumerated Data Type) is used to define an enum in Java. Unlike C/C++, enum in Java is more <i>powerful</i>. Here, we can define an enum either inside the class or outside the class.</Para>
            </Main>
            <RightAd>
              <AdHero>
                <HeroEyebrow>Duroflex Experience Centre</HeroEyebrow>
                <HeroTitle>New Duroflex Plush<br />Mattresses</HeroTitle>
                <HeroText>Get up to 25% Off on your<br />mattress purchase</HeroText>
              </AdHero>
              <AdCorner>
                <svg width="12" height="12" viewBox="0 0 12 12"><path d="M1 1l10 10M11 1L1 11" stroke="#00aecd" strokeWidth="1.400" /></svg>
                <svg width="16" height="16" viewBox="0 0 16 16"><circle cx="8" cy="8" r="7" fill="none" stroke="#00aecd" strokeWidth="1.200" /><path d="M8 7v5M8 3.500V5.500" stroke="#00aecd" strokeWidth="1.600" /></svg>
              </AdCorner>
              <MapFrame><MapDrawing /></MapFrame>
              <AdButtons>
                <StoreBtn>
                  <svg width="32" height="32" viewBox="0 0 32 32"><circle cx="16" cy="16" r="16" fill="#4285f4" /><path d="M16 14v10M16 8v3" stroke="#fff" strokeWidth="3.500" /></svg>
                  Store info
                </StoreBtn>
                <DirBtn>
                  <DirDiamond s={33} bg="#fff" fg="#4285f4" />
                  Directions
                </DirBtn>
              </AdButtons>
            </RightAd>
          </Columns>
        </Page>
        <Scrollbar>
          <svg width="10" height="6" viewBox="0 0 10 6"><path d="M5 0l5 6H0z" fill="currentColor" /></svg>
          <ScrollThumb />
          <ScrollDown><svg width="10" height="6" viewBox="0 0 10 6"><path d="M0 0h10L5 6z" fill="currentColor" /></svg></ScrollDown>
        </Scrollbar>
      </Viewport>

      <DownloadBar>
        <DownloadPill>
          <svg width="15" height="15" viewBox="0 0 15 15"><path d="M1 1l13 6.500L1 14z" fill="#9ed19a" /></svg>
          Download video from this page
        </DownloadPill>
        <DownloadMini>?</DownloadMini>
        <DownloadMini>X</DownloadMini>
      </DownloadBar>

      <Taskbar>
        <Weather>
          <svg width="30" height="26" viewBox="0 0 30 26">
            <circle cx="21" cy="9" r="7.500" fill="#f7a91c" />
            <path d="M7 24a6 6 0 01-1-12 8 8 0 0115-1 6.500 6.500 0 012 13z" fill="#cfdcea" />
          </svg>
          <WeatherText>
            <span>93°F</span>
            <WeatherSub>Partly sunny</WeatherSub>
          </WeatherText>
        </Weather>
        <TaskIcons>
          <TaskCell>
            <svg width="30" height="30" viewBox="0 0 30 30">
              <defs><linearGradient id="w" x1="0" y1="0" x2="1" y2="1"><stop offset="0" stopColor="#3fc6f8" /><stop offset="1" stopColor="#0567c4" /></linearGradient></defs>
              <path fillRule="evenodd" d="M0 1h14v13.500H0zM15.500 1H30v13.500H15.500zM0 16h14v14H0zM15.500 16H30v14H15.500z" fill="url(#w)" />
            </svg>
          </TaskCell>
          <TaskCell>
            <svg width="28" height="30" viewBox="0 0 28 30"><circle cx="16" cy="12" r="9.500" fill="none" stroke="#222" strokeWidth="3" /><path d="M9 19l-7 8" stroke="#222" strokeWidth="3.500" strokeLinecap="round" /></svg>
          </TaskCell>
          <TaskCell>
            <svg width="30" height="28" viewBox="0 0 30 28"><rect x="0" y="8" width="23" height="20" rx="2" fill="#222" /><rect x="8" y="0" width="22" height="20" rx="2" fill="#f2f2f2" fillOpacity=".85" /></svg>
          </TaskCell>
          <TaskCell>
            <svg width="30" height="30" viewBox="0 0 30 30"><path d="M15 1a14 14 0 110 28H1l3-6A14 14 0 0115 1z" fill="#6b67c8" /><rect x="7" y="10" width="12" height="10" rx="2" fill="#fff" /><path d="M20 13l4-2v8l-4-2z" fill="#fff" /></svg>
          </TaskCell>
          <TaskCell>
            <svg width="30" height="30" viewBox="0 0 30 30">
              <defs><linearGradient id="e" x1="0" y1="0" x2="1" y2="0"><stop offset="0" stopColor="#0c7fd0" /><stop offset="1" stopColor="#5fd08a" /></linearGradient></defs>
              <circle cx="15" cy="15" r="15" fill="url(#e)" />
              <path d="M30 17c0-5-5-7-9-7-7 0-12 5-12 11 0 4 3 9 8 9 4 0 8-1 10-4-5 2-11 1-11-4 0-2 2-3 5-3 4 0 9 1 9-2z" fill="#0f5ea8" />
              <path d="M16 13a4 4 0 100 8c2 0 3-1 3-2 0 1 3-6-3-6z" fill="#d9e4f7" />
            </svg>
          </TaskCell>
          <TaskCell>
            <svg width="30" height="28" viewBox="0 0 30 28"><path d="M0 1h11l3 3h16v5H0z" fill="#e5a50a" /><rect y="5" width="30" height="23" rx="1" fill="#fcd65c" /><rect x="5" y="19" width="20" height="9" rx="2" fill="#0e80d8" /></svg>
          </TaskCell>
          <TaskCell>
            <svg width="26" height="30" viewBox="0 0 26 30"><path d="M13 0l3 0 7 26H3L10 0z" fill="#f58a1f" /><path d="M8 12h10l1.500 6H6.500z" fill="#d6d6d6" /><rect x="0" y="25" width="26" height="5" rx="1.500" fill="#e87b10" /></svg>
          </TaskCell>
          <TaskCell $on><ChromeLogo /></TaskCell>
        </TaskIcons>
        <Tray>
          <TrayIcons>
            <svg width="16" height="10" viewBox="0 0 16 10"><path d="M1 9l7-7 7 7" fill="none" stroke="#222" strokeWidth="1.300" /></svg>
            <svg width="20" height="13" viewBox="0 0 20 13"><path d="M5 12a4 4 0 01-.5-8A5.500 5.500 0 0115 4a4 4 0 010 8z" fill="#b9b9b9" stroke="#222" /></svg>
            <svg width="20" height="15" viewBox="0 0 20 15"><path d="M1 5a13 13 0 0118 0M4 8a8.500 8.500 0 0112 0" fill="none" stroke="#aab1ba" strokeWidth="1.200" /><path d="M7 10.500a4 4 0 016 0" fill="none" stroke="#222" strokeWidth="1.300" /><circle cx="10" cy="13" r="1.500" fill="#222" /></svg>
            <svg width="21" height="16" viewBox="0 0 21 16"><path d="M1 5h3l5-4v14l-5-4H1z" fill="none" stroke="#222" strokeWidth="1.200" /><path d="M11 5a4 4 0 010 6" fill="none" stroke="#222" /><path d="M14 3a7 7 0 010 10M17 1a10 10 0 010 14" fill="none" stroke="#aab1ba" /></svg>
            <svg width="21" height="13" viewBox="0 0 21 13"><rect x=".6" y=".6" width="17" height="11.800" rx="2.500" fill="none" stroke="#222" strokeWidth="1.200" /><rect x="3" y="3" width="8" height="7" rx="1" fill="#222" /><rect x="18.500" y="4" width="2" height="5" fill="#222" /></svg>
          </TrayIcons>
          <Clock>
            <span>3:38 PM</span>
            <span>6/17/2022</span>
          </Clock>
          <Badge>4</Badge>
        </Tray>
      </Taskbar>
    </Screen>
  );
}
